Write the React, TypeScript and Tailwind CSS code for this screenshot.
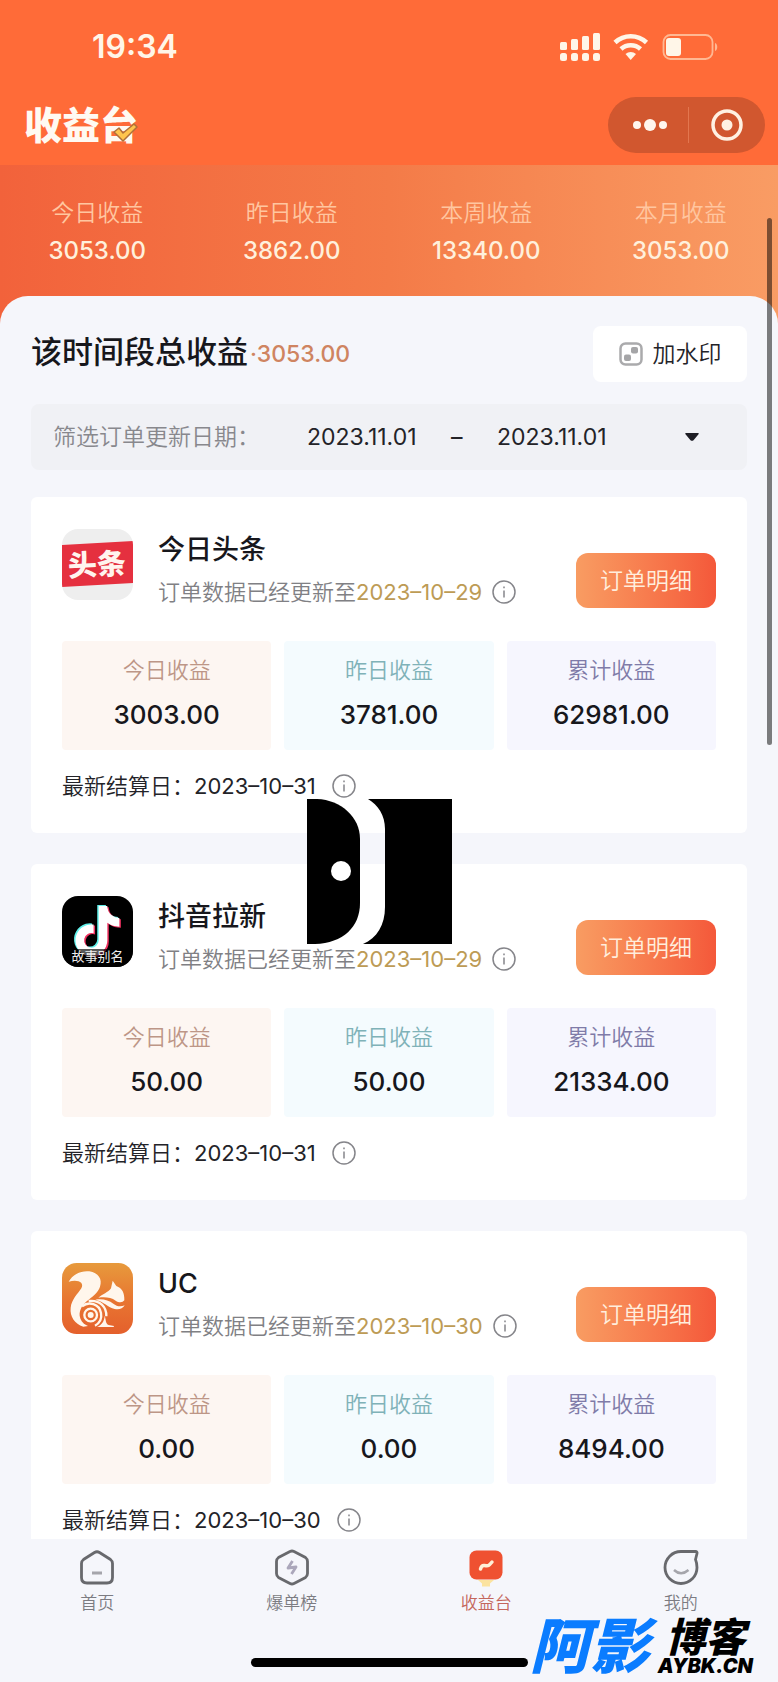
import type { ReactNode } from "react";

const totals = [
  { label: "今日收益", value: "3053.00" },
  { label: "昨日收益", value: "3862.00" },
  { label: "本周收益", value: "13340.00" },
  { label: "本月收益", value: "3053.00" },
];

function ToutiaoLogo() {
  return (
    <div className="relative mt-1 flex size-[71px] shrink-0 items-center justify-center overflow-hidden rounded-2xl bg-[#eeeeee]">
      <svg viewBox="0 0 71 71" className="absolute inset-0 size-full">
        <path d="M0 16 71 12V54L0 58Z" fill="#e5303f" />
      </svg>
      <span className="relative -rotate-3 text-[29px] leading-9 font-black text-[#fff4ee]">头条</span>
    </div>
  );
}

function DouyinLogo() {
  const note =
    "M448 209.91a210.06 210.06 0 0 1-122.77-39.25V349.38A162.55 162.55 0 1 1 185 188.31V278.2a74.62 74.62 0 1 0 52.23 71.18V0h88a121.18 121.18 0 0 0 1.86 22.17A122.18 122.18 0 0 0 381 102.39a121.43 121.43 0 0 0 67 20.14Z";
  return (
    <div className="relative mt-1 flex size-[71px] shrink-0 items-end justify-center overflow-hidden rounded-2xl bg-black">
      <svg viewBox="0 0 71 71" className="absolute inset-0 size-full">
        <g transform="translate(12 9) scale(.098)">
          <path d={note} fill="#5ff0ea" />
          <path d={note} fill="#f0305f" transform="translate(30 22)" />
          <path d={note} fill="#fff" transform="translate(15 11)" />
        </g>
        <path d="M0 53h71v18H0z" fill="#000" opacity=".65" />
      </svg>
      <span className="relative pb-[3px] text-[13px] leading-4 text-[#eeeeee]">故事别名</span>
    </div>
  );
}

function UcLogo() {
  return (
    <svg viewBox="0 0 213 213" className="mt-1 size-[71px] shrink-0">
      <defs>
        <linearGradient id="uc" x1="0" y1="0" x2="0" y2="1">
          <stop offset="0" stopColor="#e79a3c" />
          <stop offset=".55" stopColor="#e87431" />
          <stop offset="1" stopColor="#e4602c" />
        </linearGradient>
      </defs>
      <rect width="213" height="213" rx="44" fill="url(#uc)" />
      <g fill="#fff6ec">
        <path d="M20 56C32 34 58 22 82 25c27 4 40 24 32 46-6 19-24 30-40 44-17 15-24 32-20 48 3 12 12 22 24 26l-14 2C38 182 23 160 26 134c3-25 20-40 32-58C68 58 48 48 20 56Z" />
        <path d="M152 53 163 69c17 6 25 20 24 43-5 7-16 8-26 1-14-10-32-12-52-9 12-10 30-16 38-28Z" />
        <path d="M100 110c20-4 40 1 54 12 10 8 22 10 34 5-6 11-18 14-30 11-20-5-32-22-58-28Z" />
        <circle cx="86" cy="156" r="9" />
        <path d="M128 158c4 10 2 24 12 28l16 3-1 3h-50c14-6 22-18 23-34Z" />
      </g>
      <g fill="none" stroke="#fff6ec" strokeWidth="7">
        <circle cx="86" cy="156" r="19" />
        <path d="M60 130C80 114 112 122 117 150c3 16-4 30-18 38" />
        <path d="M80 114c34-4 54 18 53 46" />
      </g>
    </svg>
  );
}

const products = [
  { name: "今日头条", logo: <ToutiaoLogo />, updated: "2023–10–29", settled: "2023–10–31", today: "3003.00", yesterday: "3781.00", total: "62981.00" },
  { name: "抖音拉新", logo: <DouyinLogo />, updated: "2023–10–29", settled: "2023–10–31", today: "50.00", yesterday: "50.00", total: "21334.00" },
  { name: "UC", logo: <UcLogo />, updated: "2023–10–30", settled: "2023–10–30", today: "0.00", yesterday: "0.00", total: "8494.00" },
];

function InfoButton({ className }: { className: string }) {
  return (
    <button type="button" aria-label="说明" className={`flex shrink-0 items-center ${className}`}>
      <svg viewBox="0 0 24 24" className="size-6" fill="none" stroke="#85858a" strokeWidth="1.5">
        <circle cx="12" cy="12" r="11" />
        <path d="M12 10.5V17.5M12 6.5V8.2" />
      </svg>
    </button>
  );
}

function Amount({ label, value, className }: { label: string; value: string; className: string }) {
  return (
    <div className={`rounded-sm pt-[11px] pb-[9px] text-center ${className}`}>
      <div className="text-[22px] leading-9 font-[350]">{label}</div>
      <div className="text-[26px] leading-[53px] font-medium text-[#17171c]">{value}</div>
    </div>
  );
}

function ProductCard({ product }: { product: (typeof products)[number] }) {
  return (
    <section className="rounded-md bg-white px-[31px] pt-7 pb-[25px]">
      <div className="flex items-start">
        {product.logo}
        <div className="ml-[25px] min-w-0 flex-1 pt-1 whitespace-nowrap">
          <h2 className="text-[27px] leading-[42px] font-medium text-[#17171c]">{product.name}</h2>
          <p className="flex items-center text-[22px] leading-[42px] font-[350] text-[#808084]">
            订单数据已经更新至
            <span className="font-normal text-[#bd9b55]">{product.updated}</span>
            <InfoButton className="ml-2.5" />
          </p>
        </div>
        <button
          type="button"
          className="mt-7 h-[55px] w-[140px] shrink-0 rounded-xl bg-linear-to-r from-[#f89c62] to-[#f4583a] pt-0.5 text-[23px] font-[350] text-[#ffeedd]"
        >
          订单明细
        </button>
      </div>
      <div className="mt-7 grid grid-cols-3 gap-[13px]">
        <Amount label="今日收益" value={product.today} className="bg-[#fdf6f2] text-[#bd9687]" />
        <Amount label="昨日收益" value={product.yesterday} className="bg-[#f4fbfe] text-[#7fb2b8]" />
        <Amount label="累计收益" value={product.total} className="bg-[#f6f6fe] text-[#7f7ba8]" />
      </div>
      <p className="mt-3.5 flex items-center text-[22px] leading-11 font-[350] whitespace-nowrap text-[#232328]">
        最新结算日：<span className="font-normal">{product.settled}</span>
        <InfoButton className="ml-4" />
      </p>
    </section>
  );
}

function StatusIcons() {
  return (
    <svg viewBox="0 0 160 32" className="h-8 w-40" fill="#fff6e8">
      <rect x="0" y="11" width="7" height="8" rx="1.500" />
      <rect x="11" y="8" width="7" height="11" rx="1.500" />
      <rect x="22" y="5" width="7" height="14" rx="1.500" />
      <rect x="33" y="2" width="7" height="17" rx="1.500" />
      <rect x="0" y="22" width="7" height="8" rx="2.500" />
      <rect x="11" y="22" width="7" height="8" rx="2.500" />
      <rect x="22" y="22" width="7" height="8" rx="2.500" />
      <rect x="33" y="22" width="7" height="8" rx="2.500" />
      <g fill="none" stroke="#fff6e8" strokeWidth="4.6">
        <path d="M55 11.5a23 23 0 0 1 31.500 0" />
        <path d="M61 18a14.500 14.500 0 0 1 19.500 0" />
      </g>
      <path d="M65.500 23a8 8 0 0 1 10.500 0l-5.300 6z" />
      <rect x="103.500" y="4" width="49" height="24" rx="7" fill="none" stroke="#ffb893" strokeWidth="1.800" />
      <rect x="106" y="7" width="15" height="18" rx="3" />
      <path d="M155 12c3 1 3 7 0 8z" fill="#ffb893" />
    </svg>
  );
}

function NavItem({ label, active, children }: { label: string; active?: boolean; children: ReactNode }) {
  return (
    <a href="#" className="flex flex-col items-center">
      {children}
      <span className={active ? "text-[17px] leading-7 font-[350] text-[#c4665c]" : "text-[17px] leading-7 font-[350] text-[#7c7c82]"}>
        {label}
      </span>
    </a>
  );
}

export default function App() {
  return (
    <div className="relative flex h-screen flex-col overflow-hidden bg-[#f5f6fb] font-['Inter','Noto_Sans_CJK_SC',sans-serif]">
      <header className="shrink-0 bg-[#ff6b38] pb-3">
        <div className="flex h-[97px] items-center justify-between pr-[58px] pb-1 pl-[92px] text-[32px] font-semibold text-[#fff6e8]">
          19:34
          <StatusIcons />
        </div>
        <div className="flex h-14 items-center justify-between pr-[13px] pl-6">
          <h1 className="relative text-[38px] leading-none font-black text-[#fffaf2]">
            收益台
            <svg viewBox="0 0 26 22" className="absolute right-0 bottom-0 h-[22px] w-[26px]">
              <path d="M2 10 7 6l4 5L22 2l3 3L11 19Z" fill="#ffc44d" stroke="#b0703a" strokeWidth="1.500" strokeLinejoin="round" />
            </svg>
          </h1>
          <div className="flex h-14 w-[157px] items-center rounded-full bg-[#d1572f]">
            <button type="button" aria-label="更多" className="flex h-full flex-1 items-center justify-center pl-1">
              <svg viewBox="0 0 36 12" className="h-3 w-9" fill="#fff6ee">
                <circle cx="5" cy="6" r="4" />
                <circle cx="18" cy="6" r="6" />
                <circle cx="31" cy="6" r="4" />
              </svg>
            </button>
            <span className="h-9 w-px bg-[#e3764f]" />
            <button type="button" aria-label="关闭" className="flex h-full flex-1 items-center justify-center">
              <svg viewBox="0 0 32 32" className="size-8">
                <circle cx="16" cy="16" r="14" fill="none" stroke="#fff1e2" strokeWidth="3.500" />
                <circle cx="16" cy="16" r="5.500" fill="#fff1e2" />
              </svg>
            </button>
          </div>
        </div>
      </header>

      <div className="flex min-h-0 flex-1 flex-col overflow-hidden">
        <div className="shrink-0 bg-linear-to-r from-[#f2623b] via-[#f47b48] to-[#f99c64] pt-7 pb-16">
          <div className="grid grid-cols-4 text-center">
            {totals.map((item) => (
              <div key={item.label}>
                <div className="text-[23px] leading-10 font-[350] text-[#ffc6a0]">{item.label}</div>
                <div className="text-2xl leading-9 font-medium text-[#fff0dc]">{item.value}</div>
              </div>
            ))}
          </div>
        </div>

        <main className="-mt-[37px] shrink-0 rounded-t-[28px] bg-[#f5f6fb] px-[31px] pt-7">
          <div className="flex h-[60px] items-center justify-between">
            <h2 className="flex items-center pb-1 text-[31px] font-medium text-[#17171c]">
              该时间段总收益
              <span className="ml-0.5 pt-1 text-[23px] text-[#cf8461]">·3053.00</span>
            </h2>
            <button type="button" className="flex h-14 w-[154px] items-center justify-center gap-2.5 rounded-lg bg-white text-[23px] font-[350] text-[#232328]">
              <svg viewBox="0 0 24 24" className="size-6">
                <rect x="1.500" y="1.500" width="21" height="21" rx="5" fill="none" stroke="#aaaaac" strokeWidth="2.500" />
                <rect x="12" y="5" width="7" height="6.500" rx="2" fill="#a5a5a7" />
                <rect x="5" y="12.500" width="7" height="6.500" rx="2" fill="#a5a5a7" />
              </svg>
              加水印
            </button>
          </div>

          <div className="mt-5 flex h-[66px] items-center rounded-lg bg-[#f0f1f5] pr-12 pl-[22px] text-[23px] text-[#232328]">
            <label htmlFor="start" className="w-[254px] font-[350] whitespace-nowrap text-[#88888d]">
              筛选订单更新日期：
            </label>
            <input id="start" readOnly value="2023.11.01" className="w-[144px] bg-transparent outline-none" />
            <span className="w-[46px]">–</span>
            <input aria-label="结束日期" readOnly value="2023.11.01" className="w-[144px] min-w-0 bg-transparent outline-none" />
            <button type="button" aria-label="展开日期" className="ml-auto">
              <svg viewBox="0 0 14 8" className="h-2 w-3.5">
                <path d="M1 0h12q1.500 0 .5 1.200L8.500 7.300q-1.500 1-3 0L.5 1.200Q-.5 0 1 0Z" fill="#1d1d24" />
              </svg>
            </button>
          </div>

          <div className="mt-[27px] flex flex-col gap-[31px]">
            {products.map((product) => (
              <ProductCard key={product.name} product={product} />
            ))}
          </div>
        </main>
      </div>

      <nav className="relative z-10 shrink-0 bg-[#f5f6fb]">
        <div className="grid h-[119px] grid-cols-4 pt-2.5">
          <NavItem label="首页">
            <svg viewBox="0 0 36 40" className="h-10 w-9" fill="none">
              <path d="M15.500 3.500 4.500 10.500Q2.500 12 2.500 14.500V28.500Q2.500 34 8 34H28Q33.500 34 33.500 28.500V14.500Q33.500 12 31.500 10.500L20.500 3.500Q18 2 15.500 3.500Z" stroke="#68696d" strokeWidth="2.800" />
              <path d="M13 24h10" stroke="#a5a5ab" strokeWidth="3" />
            </svg>
          </NavItem>
          <NavItem label="爆单榜">
            <svg viewBox="0 0 36 40" className="h-10 w-9" fill="none">
              <path d="M16 2.500 4.500 8.500Q2.500 10 2.500 12.500V24.500Q2.500 27 4.500 28.500L16 34.500Q18 35.500 20 34.500L31.500 28.500Q33.500 27 33.500 24.500V12.500Q33.500 10 31.500 8.500L20 2.500Q18 1.500 16 2.500Z" stroke="#68696d" strokeWidth="2.800" />
              <path d="M18.500 12 14 19l8-1-4.500 7" stroke="#aba7bb" strokeWidth="2.800" strokeLinejoin="round" />
            </svg>
          </NavItem>
          <NavItem label="收益台" active>
            <svg viewBox="0 0 36 40" className="h-10 w-9" fill="none">
              <path d="M10 31h16l-4 3.500v3h-8v-3z" fill="#fbe3a0" />
              <rect x="1.500" y="1.500" width="33" height="29" rx="7" fill="#ef5131" />
              <path d="M12.500 20q1-4 4-3.500t4 0 3.500-3.500" stroke="#fff0d8" strokeWidth="3.500" strokeLinecap="round" />
            </svg>
          </NavItem>
          <NavItem label="我的">
            <svg viewBox="0 0 36 40" className="h-10 w-9" fill="none">
              <path d="M18 2.500H32.500Q34.500 2.500 34 4.500L32.500 10.500Q34 14 34 18.500A16 16 0 1 1 18 2.500Z" stroke="#68696d" strokeWidth="2.800" strokeLinejoin="round" />
              <path d="M11 21q7 6.500 14.500 0" stroke="#a5a5ab" strokeWidth="2.500" />
            </svg>
          </NavItem>
        </div>
        <div className="flex h-6 justify-center">
          <div className="h-[9px] w-[277px] rounded-full bg-black" />
        </div>
      </nav>

      {/* overlays */}
      <div className="absolute top-[218px] right-[6px] z-20 h-[527px] w-[5px] rounded-full bg-black/50" />
      <svg viewBox="0 0 145 145" className="absolute top-[799px] left-[307px] z-20 size-[145px]">
        <path d="M0 0H10C34 1 53 18 53 40V104C53 128 36 144 8 145H0Z" />
        <path d="M61 0H145V145H56C70 139 78 126 78 108V30C78 16 71 6 61 0Z" />
        <circle cx="34" cy="72" r="10" fill="#fff" />
      </svg>
      <div className="absolute right-[25px] bottom-1.5 z-20 flex items-end gap-2 font-black whitespace-nowrap italic">
        <span className="text-[60px] leading-[60px] text-[#0a7cff]">阿影</span>
        <span className="flex flex-col items-center text-black">
          <span className="text-[40px] leading-9">博客</span>
          <span className="text-[20px] leading-5">AYBK.CN</span>
        </span>
      </div>
    </div>
  );
}
